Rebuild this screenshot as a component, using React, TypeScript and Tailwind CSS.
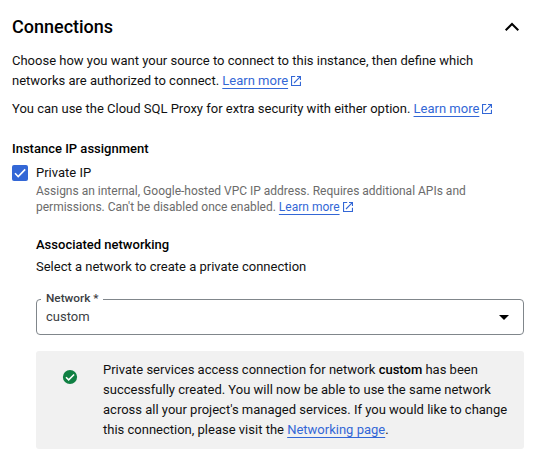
import React from 'react';

function ExternalIcon() {
  return (
    <svg className="ml-[3px] inline-block h-[10px] w-[10px] align-[-1px]" viewBox="0 0 10 10" fill="none" stroke="#3367d6" strokeWidth="1.1">
      <path d="M4.2.55H.55v8.9h8.9V5.8M6 .55h3.45V4M9.3.7L3 7" />
    </svg>
  );
}

const link = 'text-[#3367d6] underline decoration-1 underline-offset-[3px] [text-decoration-skip-ink:none]';

function LearnMore() {
  return (
    <>
      <a className={link}>Learn more</a>
      <ExternalIcon />
    </>
  );
}

export default function App() {
  return (
    <main className="h-[465px] w-[552px] overflow-hidden bg-white pl-3 font-[Roboto,sans-serif] text-[13px] leading-5 text-[#111]">
      <header className="flex h-[51px] w-[512px] items-center justify-between pt-[3px]">
        <h1 className="text-[18px] font-medium leading-6 text-black">Connections</h1>
        <svg className="h-6 w-6" viewBox="0 0 24 24" fill="none" stroke="#000" strokeWidth="2">
          <path d="M5.7 15.3l6.3-6.3 6.3 6.3" />
        </svg>
      </header>
      <p className="whitespace-nowrap">
        Choose how you want your source to connect to this instance, then define which<br />
        networks are authorized to connect. <LearnMore />
      </p>
      <p className="mt-2 whitespace-nowrap">
        You can use the Cloud SQL Proxy for extra security with either option. <LearnMore />
      </p>
      <h2 className="mt-5 font-medium text-black">Instance IP assignment</h2>
      <div className="mt-1 flex gap-2">
        <span className="mt-0.5 flex h-4 w-4 shrink-0 items-center justify-center rounded-[2px] bg-[#3367d6]">
          <svg className="h-4 w-4" viewBox="0 0 16 16" fill="none" stroke="#fff" strokeWidth="1.6">
            <path d="M3 8.3l3.2 3.2L13.2 4.4" />
          </svg>
        </span>
        <div>
          <div>Private IP</div>
          <p className="whitespace-nowrap text-[12px] leading-4 text-[#6b6b6b]">
            Assigns an internal, Google-hosted VPC IP address. Requires additional APIs and<br />
            permissions. Can't be disabled once enabled. <LearnMore />
          </p>
        </div>
      </div>
      <section className="ml-6 mt-5 w-[488px]">
        <h2 className="font-medium text-black">Associated networking</h2>
        <p className="mt-0.5">Select a network to create a private connection</p>
        <div className="relative mt-[22px] flex h-9 items-center justify-between rounded border border-[#80868b] pl-[9px] pr-[14px]">
          <span className="absolute -top-[10px] left-1 w-[62px] whitespace-nowrap bg-white pl-[5px] text-[11.8px] font-medium leading-4 text-[#3c4043]">Network *</span>
          <span className="text-[#3c4043]">custom</span>
          <svg className="h-[5px] w-[10px]" viewBox="0 0 10 5"><path d="M0 0h10L5 5z" /></svg>
        </div>
        <div className="mt-4 flex h-[98px] rounded-[3px] bg-[#f1f1f1] pl-[26px] pt-[9px]">
          <svg className="mt-[9px] h-4 w-4 shrink-0" viewBox="0 0 16 16">
            <circle cx="8" cy="8" r="7.1" fill="#108043" />
            <path d="M4 8.2l2.7 2.7 5.4-5.4" fill="none" stroke="#fff" strokeWidth="1.5" />
          </svg>
          <p className="ml-[25px] whitespace-nowrap">
            Private services access connection for network <b className="font-medium text-black">custom</b> has been<br />
            successfully created. You will now be able to use the same network<br />
            across all your project's managed services. If you would like to change<br />
            this connection, please visit the <a className={link}>Networking page</a>.
          </p>
        </div>
      </section>
    </main>
  );
}
